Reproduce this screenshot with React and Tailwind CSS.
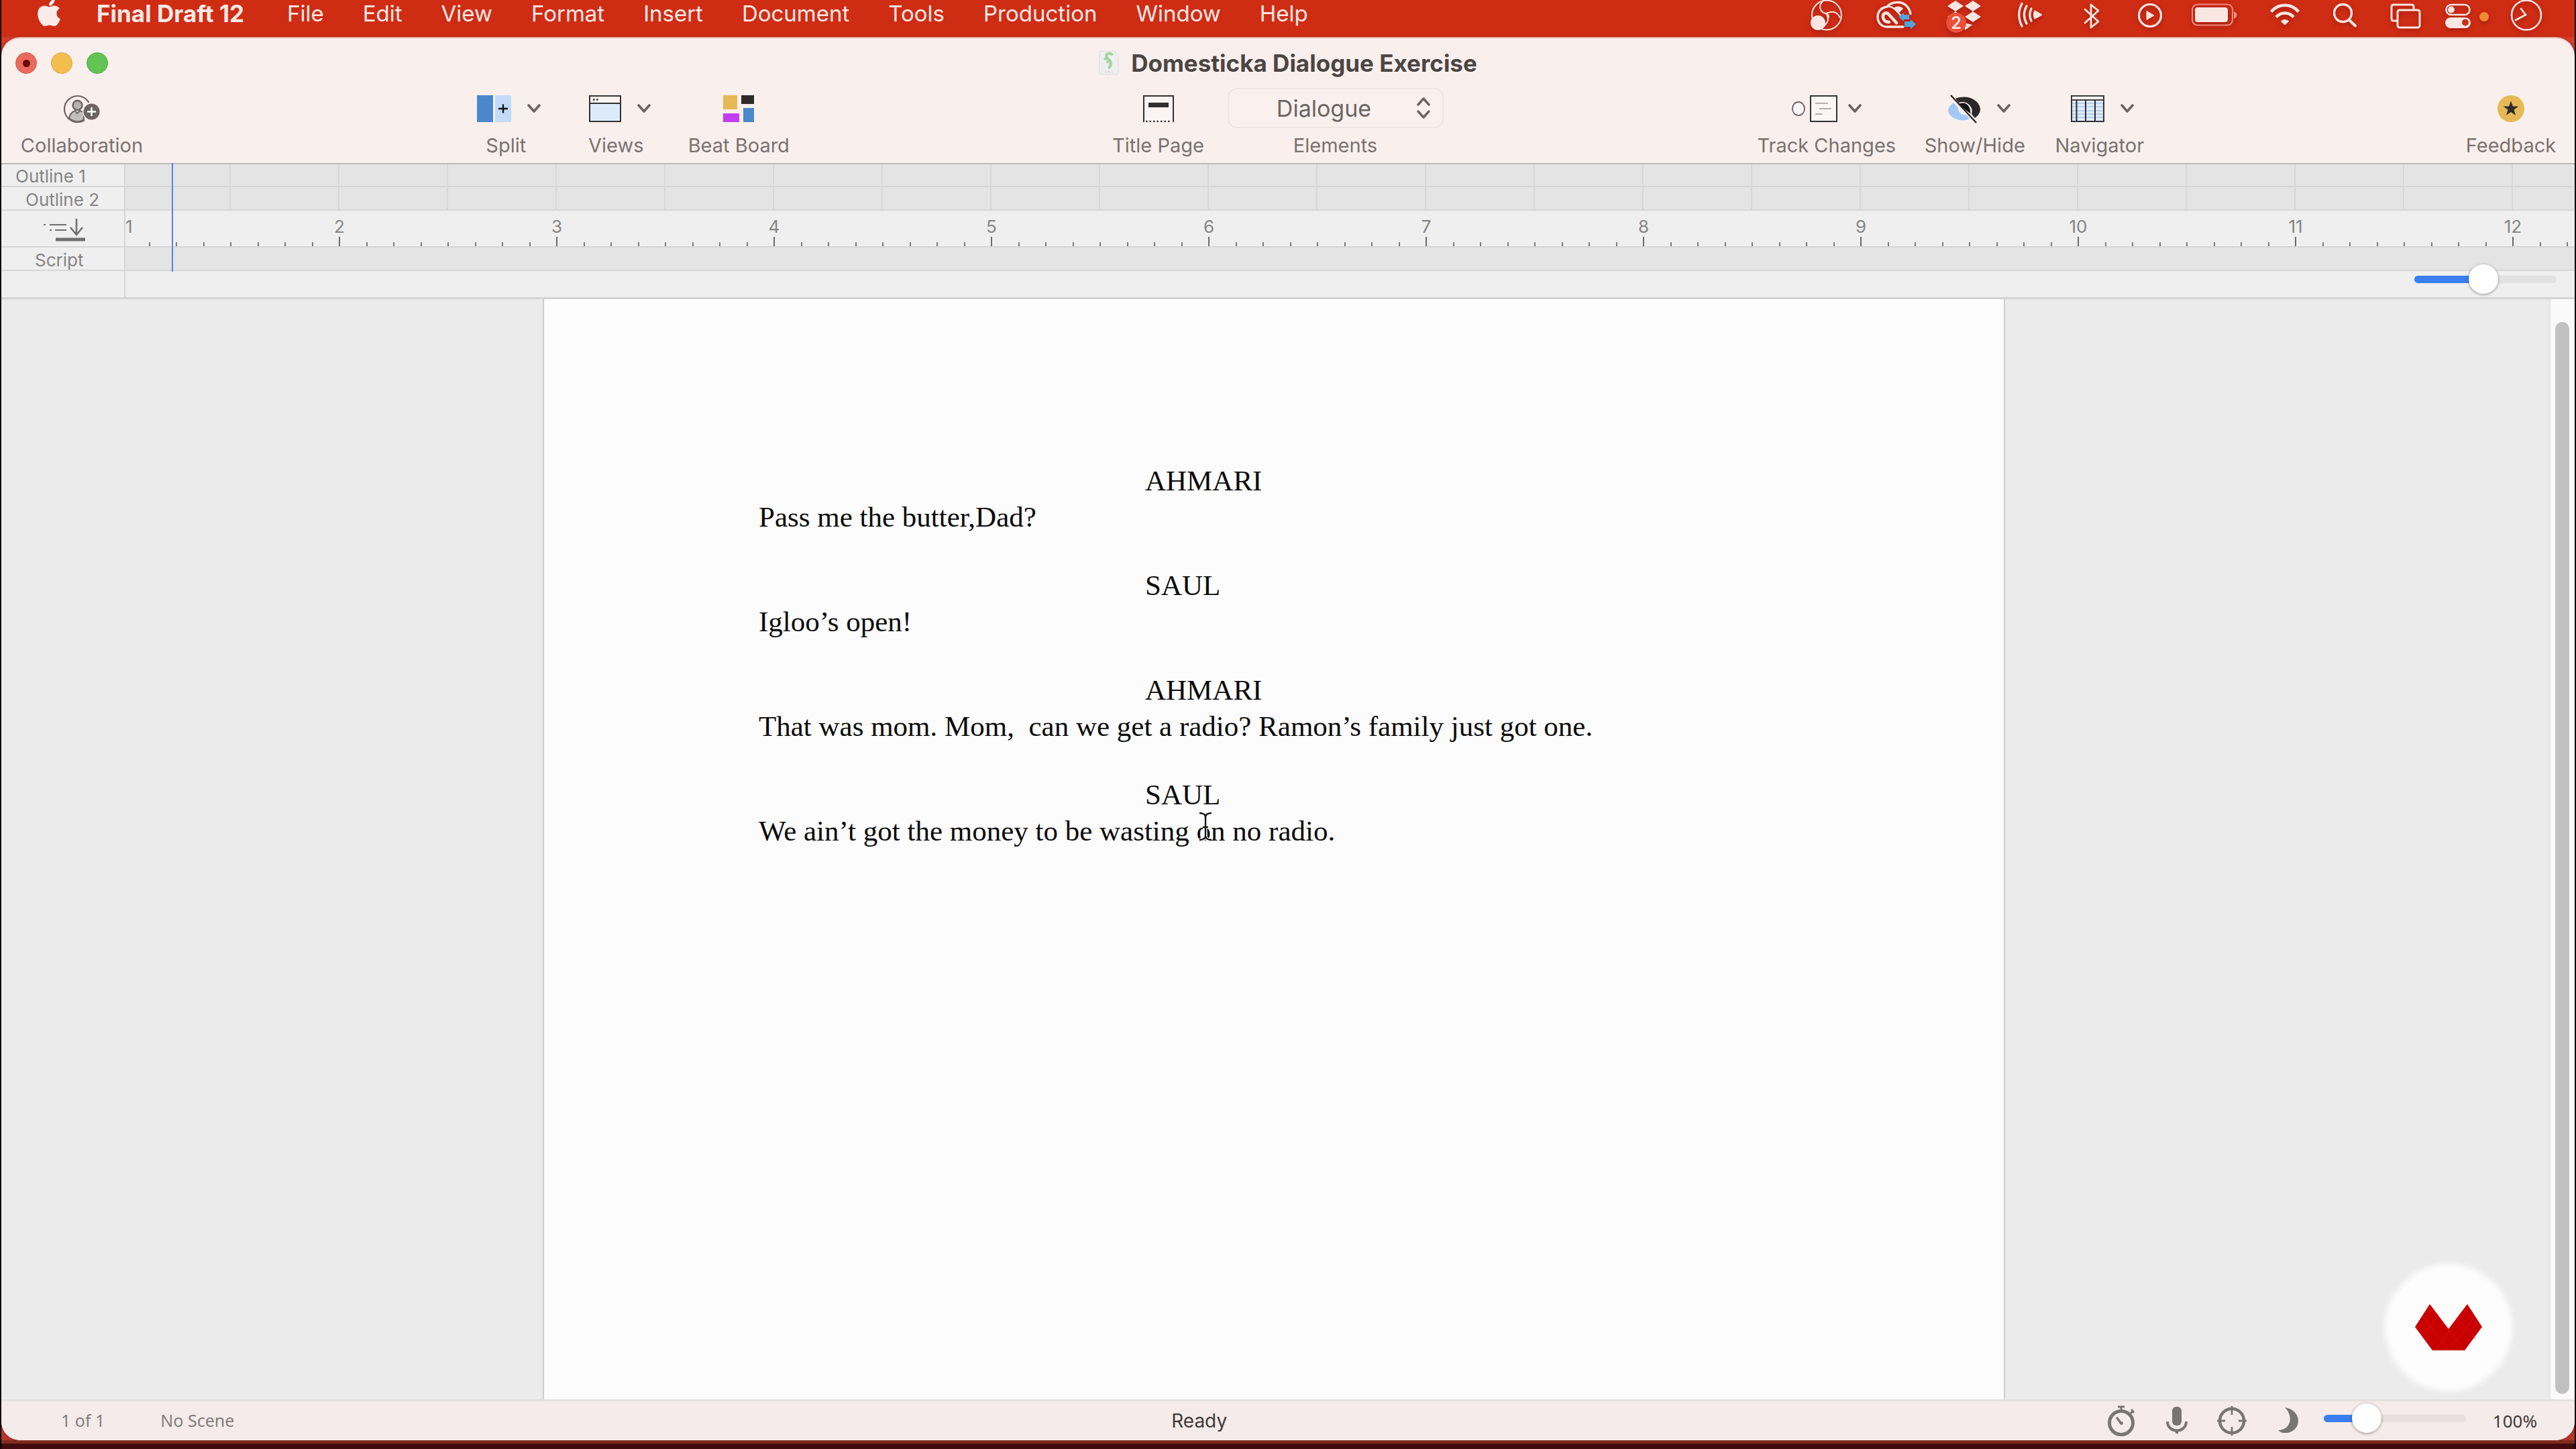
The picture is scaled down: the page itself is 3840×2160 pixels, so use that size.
import React from "react";
import { FaApple } from "react-icons/fa";

const MENUS = ["File", "Edit", "View", "Format", "Insert", "Document", "Tools", "Production", "Window", "Help"];

const SCRIPT = [
  { who: "AHMARI", line: "Pass me the butter,Dad?" },
  { who: "SAUL", line: "Igloo’s open!" },
  { who: "AHMARI", line: "That was mom. Mom,  can we get a radio? Ramon’s family just got one." },
  { who: "SAUL", line: "We ain’t got the money to be wasting on no radio." },
];

const PALE = "#fbe6e2";

/* ---------- menu bar status icons, all 48px tall ---------- */

const ObsIcon = () => (
  <svg width="48" height="48" viewBox="0 0 48 48" fill="none" stroke={PALE} strokeWidth="2">
    <circle cx="24" cy="22.500" r="22" />
    <path d="M18 2c-6 6-5 15 4 18 5 1 6 4 4 8" />
    <path d="M22 20c5-1 8-3 13-2 4 1 7 4 9 9" />
    <path d="M24 21c3 6 2 12-2 16-2 3-5 5-8 5" />
    <circle cx="11" cy="34" r="10" fill={PALE} />
  </svg>
);

const CloudIcon = () => (
  <svg width="59" height="48" viewBox="0 0 59 48" fill="none">
    <path d="M40 40H16C7 40 2 33 2 25S8 11 16 10C20 5 26 3.500 32 3.500c10 0 17 7 19 17" stroke={PALE} strokeWidth="3.400" strokeLinecap="round" />
    <path d="M16 10c5-1 9 1 13 5l10 11" stroke={PALE} strokeWidth="2.500" />
    <path d="M30 34 19 22c-4-5-10-2-9 4 1 5 4 7 9 7" stroke={PALE} strokeWidth="4.500" strokeLinecap="round" />
    <path d="M26 12c4-4 11-3 14 1l-6 6z" fill={PALE} />
    <path d="m33 25 8-6v3h8v7h-8v3z" fill="#4fa5de" />
    <path d="m59 36-8-7v3h-9v8h9v4z" fill="#4fa5de" />
  </svg>
);

const DropboxIcon = () => (
  <svg width="52" height="50" viewBox="0 0 52 50" fill={PALE}>
    <path d="m14 1 12 8-12 8L2 9zM40 1l12 8-12 8-12-8zM40 17l12 8-12 8-12-8zM14 17l12 8-12 8L2 25zM27 34l12 3-11 8z" />
    <circle cx="15" cy="34" r="15" fill="#ec4f38" />
    <text x="15" y="43" textAnchor="middle" fontSize="25" fontWeight="600" fontFamily="Inter, sans-serif">2</text>
  </svg>
);

const CastIcon = () => (
  <svg width="38" height="48" viewBox="0 0 38 48" fill="none" stroke={PALE} strokeWidth="3.200" strokeLinecap="round">
    <path d="M7 5.500C1 17 1 27 7 39M14 9c-5 9-5 17 0 26M21 13c-3 6-3 12 0 18" />
    <path d="M26 16c5 2 8 4 11 6-3 2-6 4-11 6-2-3-2-9 0-12z" fill={PALE} strokeWidth="1" />
  </svg>
);

const BluetoothIcon = () => (
  <svg width="24" height="48" viewBox="0 0 24 48" fill="none" stroke={PALE} strokeWidth="2.800" strokeLinejoin="round" strokeLinecap="round">
    <path d="M2 14l20 18-11 9V7l11 9L2 34" />
  </svg>
);

const PlayIcon = () => (
  <svg width="38" height="48" viewBox="0 0 38 48" fill="none" stroke={PALE} strokeWidth="3.200">
    <circle cx="19" cy="23" r="16.500" />
    <path d="M14 16.500v13l11-6.500z" fill={PALE} strokeWidth="1" strokeLinejoin="round" />
  </svg>
);

const BatteryIcon = () => (
  <svg width="69" height="48" viewBox="0 0 69 48" fill="none">
    <rect x="1" y="6.500" width="60" height="31" rx="8" stroke="#f08a7c" strokeWidth="2.200" />
    <rect x="5" y="11" width="49" height="22" rx="4" fill={PALE} />
    <path d="M63 17c6 2 6 9 0 11z" fill="#f08a7c" />
  </svg>
);

const WifiIcon = () => (
  <svg width="44" height="48" viewBox="0 0 44 48" fill="none" stroke={PALE} strokeWidth="4.600">
    <path d="M1.500 17.500c11-13 30-13 41 0" />
    <path d="M9 25.500c7-8 19-8 26 0" />
    <path d="M16 32c3-4 9-4 12 0l-6 5.500z" fill={PALE} stroke="none" />
  </svg>
);

const SearchIcon = () => (
  <svg width="35" height="48" viewBox="0 0 35 48" fill="none" stroke={PALE} strokeWidth="3.400" strokeLinecap="round">
    <circle cx="14.500" cy="19.500" r="13" />
    <path d="M24 30l9 8.500" strokeWidth="4" />
  </svg>
);

const WindowsIcon = () => (
  <svg width="46" height="48" viewBox="0 0 46 48" fill="none" stroke={PALE} strokeWidth="3" strokeLinejoin="round">
    <path d="M10 31H5c-2 0-3-1-3-3V10c0-2 1-3 3-3h27c2 0 3 1 3 3v4" />
    <rect x="11" y="15" width="33" height="26" rx="3" />
  </svg>
);

const ControlIcon = () => (
  <svg width="38" height="48" viewBox="0 0 38 48" fill="none">
    <rect x="1.500" y="7" width="35" height="15" rx="7.500" stroke={PALE} strokeWidth="2.600" />
    <circle cx="9" cy="14.500" r="5" fill={PALE} />
    <rect x="0" y="26" width="38" height="16" rx="8" fill={PALE} />
    <circle cx="30" cy="33.500" r="5" fill="#c92d17" />
  </svg>
);

const ClockIcon = () => (
  <svg width="48" height="48" viewBox="0 0 48 48" fill="none" stroke={PALE} strokeWidth="2.600">
    <circle cx="24" cy="22.500" r="22" />
    <path d="M16 13l7 9-15 8" strokeLinecap="round" />
  </svg>
);

const STATUS_ICONS = [
  { label: "OBS", icon: <ObsIcon />, gap: "" },
  { label: "Creative Cloud", icon: <CloudIcon />, gap: "ml-[50px]" },
  { label: "Dropbox", icon: <DropboxIcon />, gap: "ml-[45px]" },
  { label: "Cast", icon: <CastIcon />, gap: "ml-[54px]" },
  { label: "Bluetooth", icon: <BluetoothIcon />, gap: "ml-[61px]" },
  { label: "Now playing", icon: <PlayIcon />, gap: "ml-[56px]" },
  { label: "Battery", icon: <BatteryIcon />, gap: "ml-[43px]" },
  { label: "Wi-Fi", icon: <WifiIcon />, gap: "ml-[48px]" },
  { label: "Search", icon: <SearchIcon />, gap: "ml-[50px]" },
  { label: "Windows", icon: <WindowsIcon />, gap: "ml-[50px]" },
  { label: "Control Center", icon: <ControlIcon />, gap: "ml-[36px]" },
];

/* ---------- toolbar icons, 40px tall ---------- */

const Chevron = () => (
  <svg width="20" height="14" viewBox="0 0 20 14" fill="none" stroke="#6b6462" strokeWidth="3.600" strokeLinecap="round" strokeLinejoin="round">
    <path d="M2 2l8 9 8-9" />
  </svg>
);

const CollabIcon = () => (
  <svg width="54" height="42" viewBox="0 0 54 42" fill="none">
    <path d="M37.500 12A19.500 19.500 0 1 0 31 38" stroke="#6b6462" strokeWidth="2.200" />
    <path d="M8 35c1-6 4-9 9-11l3 4 4-4c3 1 5 2 6 4v9c-7 5-16 4-22-2z" fill="#c4bebd" stroke="#6b6462" strokeWidth="2" />
    <circle cx="20.500" cy="16" r="7" fill="#b8b2b1" stroke="#6b6462" strokeWidth="2.400" />
    <circle cx="41.500" cy="25.500" r="13.500" fill="#f9efed" />
    <circle cx="41.500" cy="25.500" r="12" fill="#6b6462" />
    <path d="M41.500 19v13M35 25.500h13" stroke="#fff" strokeWidth="2.600" />
  </svg>
);

const SplitIcon = () => (
  <svg width="51" height="40" viewBox="0 0 51 40">
    <rect width="24" height="40" fill="#4b87cb" />
    <rect x="27" width="24" height="40" fill="#c2dbf8" />
    <path d="M39 13.500v13M32 20h14" stroke="#111" strokeWidth="2.400" />
  </svg>
);

const ViewsIcon = () => (
  <svg width="48" height="40" viewBox="0 0 48 40" fill="none" stroke="#333" strokeWidth="2">
    <rect x="1" y="1" width="46" height="38" fill="#dcebf9" />
    <rect x="1" y="1" width="46" height="11" fill="#faf3f2" />
    <path d="M6 6.500h2.500M11 6.500h2.500" strokeWidth="2.500" />
  </svg>
);

const BeatIcon = () => (
  <svg width="46" height="40" viewBox="0 0 46 40">
    <rect width="21" height="21" fill="#e7b856" />
    <rect x="27" width="19" height="13" fill="#2f2b2b" />
    <rect y="27" width="24" height="13" fill="#c43df0" />
    <rect x="30" y="19" width="16" height="21" fill="#4b87cb" />
  </svg>
);

const TitlePageIcon = () => (
  <svg width="46" height="40" viewBox="0 0 46 40" fill="none" stroke="#332e2d">
    <path d="M1 40V1h44v39" strokeWidth="2" fill="#fbf4f3" />
    <path d="M8 14.500h30" strokeWidth="7" />
    <path d="M4 39h38" strokeWidth="2.400" strokeDasharray="2.500 3" />
  </svg>
);

const TrackIcon = () => (
  <svg className="-mr-2" width="68" height="40" viewBox="0 0 68 40" fill="none">
    <ellipse cx="10" cy="20" rx="9" ry="10" stroke="#6b6462" strokeWidth="1.800" fill="#fbf6f5" />
    <rect x="28" y="1" width="39" height="38" stroke="#333" strokeWidth="2" fill="#fbf6f5" />
    <path d="M35 12h19M41 20h18M35 28h11" stroke="#b3adab" strokeWidth="2.200" />
  </svg>
);

const EyeIcon = () => (
  <svg width="50" height="44" viewBox="0 0 50 44" fill="none">
    <path d="M9 13C-5 23 1 35 18 39c6 1 11 0 15-2l-5-6c-8 1-12-4-12-10z" fill="#a3c8f6" />
    <path d="M12 7c18-7 35 2 37 15 0 6-3 10-8 14l-5-6c3-8-3-17-13-18-2 0-4 0-6 1z" fill="#2b2828" />
    <path d="M20 16c6-2 11 2 12 9z" fill="#111" stroke="#111" strokeWidth="4" />
    <path d="M5 2l38 41" stroke="#2b2828" strokeWidth="2.400" />
  </svg>
);

const NavigatorIcon = () => (
  <svg width="50" height="40" viewBox="0 0 50 40" fill="none">
    <rect x="1" y="1" width="48" height="38" fill="#dcebf9" stroke="#333" strokeWidth="2" />
    <rect x="1" y="1" width="48" height="6" fill="#fbf6f5" stroke="#333" strokeWidth="1.800" />
    <path d="M2 12h46M2 17h46M2 23h46M2 28h46M2 33h46" stroke="#aac9e6" strokeWidth="1.600" />
    <path d="M8.500 7v32M22 7v32M36 7v32" stroke="#2b2828" strokeWidth="2" />
  </svg>
);

const FeedbackIcon = () => (
  <svg width="40" height="40" viewBox="0 0 40 40">
    <circle cx="20" cy="20" r="20" fill="#e7b956" />
    <path d="M20 8.500l3 8h8.500l-7 5 2.700 8.500-7.200-5-7.200 5 2.700-8.500-7-5H17z" fill="#2f2b28" />
  </svg>
);

const DocIcon = () => (
  <svg width="30" height="38" viewBox="0 0 32 40" fill="none">
    <path d="M3 1h22l6 6v29c0 1-1 2-2 2H3c-1 0-2-1-2-2V3c0-1 1-2 2-2z" fill="#efefee" stroke="#e0dcdb" />
    <path d="M21 8c-1-5-9-4-9 1 0 5 8 6 7 12 0 4-2 6-4 7" stroke="#a5d3a1" strokeWidth="4.500" />
    <path d="M8 13l9 2M12 19l6-2" stroke="#a5d3a1" strokeWidth="3" />
    <path d="M10 34h12" stroke="#e3d6c8" strokeWidth="3" strokeDasharray="3 2" />
  </svg>
);

/* ---------- bottom status bar icons ---------- */

const GRAY = "#7a7472";

const StopwatchIcon = () => (
  <svg width="42" height="46" viewBox="0 0 42 46" fill="none" stroke={GRAY}>
    <circle cx="21" cy="26" r="17.500" strokeWidth="5" />
    <path d="M16 2h10M21 2v6" strokeWidth="3" />
    <path d="M35 12l3-3M36 6l4 5" strokeWidth="3" />
    <path d="M15 19l6 8" strokeWidth="3.500" strokeLinecap="round" />
    <circle cx="21.500" cy="26.500" r="2" fill={GRAY} />
  </svg>
);

const MicIcon = () => (
  <svg width="32" height="46" viewBox="0 0 32 46" fill="none" stroke={GRAY}>
    <rect x="9" y="2" width="14" height="28" rx="6" fill={GRAY} stroke="none" />
    <path d="M2 24c0 18 28 18 28 0" strokeWidth="4" />
    <path d="M16 37v5" strokeWidth="4" />
  </svg>
);

const TargetIcon = () => (
  <svg width="46" height="46" viewBox="0 0 46 46" fill="none" stroke={GRAY}>
    <circle cx="23" cy="23" r="18" strokeWidth="4.500" />
    <path d="M23 1v13M23 32v13M1 23h12M33 23h12" strokeWidth="2.800" />
  </svg>
);

const MoonIcon = () => (
  <svg width="32" height="46" viewBox="0 0 32 46" fill={GRAY}>
    <path d="M11 3c12 2 20 10 20 20 0 11-10 19-21 18-4 0-7-2-9-4 18 0 24-20 10-34z" />
  </svg>
);

function ToolItem({ label, icon, menu, width, shift = "" }) {
  return (
    <button type="button" className={`flex shrink-0 flex-col items-center ${width}`}>
      <span className={`flex h-[60px] items-center gap-[24px] pt-[2px] ${shift}`}>
        {icon}
        {menu && <Chevron />}
      </span>
      <span className="mt-2 whitespace-nowrap text-[29px] leading-[36px] text-[#797270]">{label}</span>
    </button>
  );
}

function Slider({ label, value, track }) {
  return (
    <input
      type="range"
      aria-label={label}
      defaultValue={value}
      className={`h-[11px] w-[212px] shrink-0 appearance-none rounded-full ${track} [&::-webkit-slider-thumb]:size-[44px] [&::-webkit-slider-thumb]:appearance-none [&::-webkit-slider-thumb]:rounded-full [&::-webkit-slider-thumb]:bg-white [&::-webkit-slider-thumb]:shadow-[0_1px_4px_rgba(0,0,0,0.4)]`}
    />
  );
}

function MenuBar() {
  return (
    <header className="flex h-[55px] shrink-0 items-start justify-between bg-[#cf2c14] pl-[48px] pr-[48px] text-[33px] leading-[41px] text-[#fbe9e6]">
      <nav className="flex items-start [text-shadow:0_3px_5px_rgba(90,0,0,0.45)]">
        <button type="button" aria-label="Apple menu" className="-mt-1 w-[94px]">
          <FaApple size={46} color="#fbecea" />
        </button>
        <button type="button" className="w-[284px] text-left text-[35px] font-bold">Final Draft 12</button>
        <div className="flex gap-[58px]">
          {MENUS.map((m) => (
            <button type="button" key={m}>{m}</button>
          ))}
        </div>
      </nav>
      <div className="flex items-start drop-shadow-[0_3px_3px_rgba(90,0,0,0.35)]">
        {STATUS_ICONS.map((s) => (
          <button type="button" key={s.label} aria-label={s.label} className={s.gap}>{s.icon}</button>
        ))}
        <span className="ml-[13px] mt-[18px] size-[14px] rounded-full bg-[#ee8a33]" />
        <button type="button" aria-label="Clock" className="ml-[32px]"><ClockIcon /></button>
      </div>
    </header>
  );
}

function TitleBar() {
  return (
    <div className="grid h-[74px] grid-cols-[1fr_auto_1fr] items-center pl-[21px]">
      <div className="flex gap-[21px]">
        <button type="button" aria-label="Close" className="flex size-8 items-center justify-center rounded-full border border-[#cf5a50] bg-[#ea6a5f]">
          <span className="size-[11px] rounded-full bg-[#6e0a06]" />
        </button>
        <button type="button" aria-label="Minimize" className="size-8 rounded-full border border-[#d9a43c] bg-[#f3be4d]" />
        <button type="button" aria-label="Zoom" className="size-8 rounded-full border border-[#50ab43] bg-[#61c454]" />
      </div>
      <h1 className="-ml-[21px] flex items-center gap-[18px] text-[35px] font-bold leading-[40px] text-[#4b4543]">
        <DocIcon />
        Domesticka Dialogue Exercise
      </h1>
      <span />
    </div>
  );
}

function Toolbar() {
  return (
    <div className="flex pl-[26px] pr-[27px]">
      <ToolItem label="Collaboration" icon={<CollabIcon />} width="w-[188px]" />
      <div className="grow-[482]" />
      <div className="flex gap-[50px]">
        <ToolItem label="Split" icon={<SplitIcon />} menu width="w-[114px]" shift="pl-2" />
        <ToolItem label="Views" icon={<ViewsIcon />} menu width="w-[114px]" shift="pl-3" />
        <ToolItem label="Beat Board" icon={<BeatIcon />} width="w-[152px]" />
      </div>
      <div className="grow-[481]" />
      <div className="flex gap-[34px]">
        <ToolItem label="Title Page" icon={<TitlePageIcon />} width="w-[138px]" />
        <div className="flex w-[322px] flex-col items-center">
          <div className="relative w-full">
            <select id="element" className="h-[60px] w-full appearance-none rounded-[14px] border-2 border-[#f0e5e3] bg-[#faf1ef] pr-[34px] [text-align-last:center] text-[34px] text-[#6c6462]">
              <option>Dialogue</option>
            </select>
            <svg className="pointer-events-none absolute right-[20px] top-[14px]" width="20" height="32" viewBox="0 0 20 32" fill="none" stroke="#6b6462" strokeWidth="3.400" strokeLinecap="round" strokeLinejoin="round">
              <path d="M2 11l8-9 8 9M2 21l8 9 8-9" />
            </svg>
          </div>
          <label htmlFor="element" className="mt-2 text-[29px] leading-[36px] text-[#797270]">Elements</label>
        </div>
      </div>
      <div className="grow-[469]" />
      <div className="flex gap-[44px]">
        <ToolItem label="Track Changes" icon={<TrackIcon />} menu width="w-[206px]" />
        <ToolItem label="Show/Hide" icon={<EyeIcon />} menu width="w-[148px]" shift="pl-3" />
        <ToolItem label="Navigator" icon={<NavigatorIcon />} menu width="w-[136px]" shift="pl-2" />
      </div>
      <div className="grow-[478]" />
      <ToolItem label="Feedback" icon={<FeedbackIcon />} width="w-[136px]" />
    </div>
  );
}

function RowLabel({ children, pad }) {
  return (
    <div className={`flex w-[185px] shrink-0 items-center border-r-2 border-[#d6d6d6] bg-[#efefef] text-[26px] leading-[30px] text-[#858585] ${pad}`}>
      {children}
    </div>
  );
}

function OutlineGrid() {
  return (
    <div className="flex min-w-0 flex-1 overflow-hidden bg-[#e4e4e4]">
      <div className="w-[157px] shrink-0 border-r-2 border-[#d8d8d8]" />
      {Array.from({ length: 22 }, (_, i) => (
        <div key={i} className="w-[162px] shrink-0 border-r-2 border-[#d8d8d8]" />
      ))}
    </div>
  );
}

function Ruler() {
  return (
    <div className="flex min-w-0 flex-1 flex-col justify-between overflow-hidden bg-[#efefef]">
      <div className="flex pt-[9px] text-[26px] leading-[30px] text-[#858585]">
        <span className="w-[157px] shrink-0">1</span>
        {Array.from({ length: 11 }, (_, i) => (
          <span key={i} className="w-[324px] shrink-0 text-center">{i + 2}</span>
        ))}
      </div>
      <div className="flex pb-[2px]">
        {Array.from({ length: 12 }, (_, c) => (
          <div key={c} className="flex w-[324px] shrink-0 items-end first:-ml-[6px]">
            {Array.from({ length: 8 }, (_, t) => (
              <span key={t} className={t === 0 ? "h-[16px] flex-1 border-l-2 border-[#6a6a6a]" : "h-[8px] flex-1 border-l-2 border-[#7a7a7a]"} />
            ))}
          </div>
        ))}
      </div>
    </div>
  );
}

function OutlinePanel() {
  return (
    <section className="relative border-t-2 border-[#bdbbbb]">
      <div className="flex h-[34px] border-b-2 border-[#d6d6d6]">
        <RowLabel pad="pl-[21px] pt-1">Outline 1</RowLabel>
        <OutlineGrid />
      </div>
      <div className="flex h-[35px] border-b-2 border-[#d6d6d6]">
        <RowLabel pad="pl-[36px] pt-1">Outline 2</RowLabel>
        <OutlineGrid />
      </div>
      <div className="flex h-[55px] border-b-2 border-[#d6d6d6]">
        <RowLabel pad="pl-[62px] pt-1">
          <button type="button" aria-label="Jump to outline">
            <svg width="64" height="36" viewBox="0 0 64 36" fill="none" stroke="#6f6f6f" strokeWidth="2.200">
              <path d="M1 10h3M10 10h25M10 18h3M18 18h17" />
              <path d="M50 1v23M41 14l9 11 9-11" strokeWidth="2.600" />
              <path d="M19 32h44" strokeWidth="5" />
            </svg>
          </button>
        </RowLabel>
        <Ruler />
      </div>
      <div className="flex h-[35px] border-b-2 border-[#d6d6d6]">
        <RowLabel pad="pl-[50px] pt-1">Script</RowLabel>
        <div className="flex-1 bg-[#e4e4e4]" />
      </div>
      <div className="flex h-[42px] border-b-[3px] border-[#d3d3d3]">
        <RowLabel pad="" />
        <div className="flex flex-1 items-center justify-end bg-[#efefef] pb-4 pr-[27px] pt-[1px]">
          <Slider label="Outline zoom" value={48} track="bg-[linear-gradient(to_right,#3a7ff2_49%,#e2e2e2_49%)]" />
        </div>
      </div>
      <div className="absolute -top-[2px] left-[254px] h-[162px] w-[2px] bg-[#5b80e6]" />
    </section>
  );
}

function Page() {
  return (
    <main className="flex min-h-0 flex-1 bg-[#ebebeb]">
      <div className="flex min-w-0 flex-1 justify-center pr-1">
        <article className="w-[2180px] border-x-2 border-[#cdcdcd] bg-[#fcfcfc] pl-[320px] pt-[244px] font-['Liberation_Serif','Times_New_Roman',serif] text-[43px] leading-[54px] text-[#0b0b0b]">
          {SCRIPT.map((s, i) => (
            <div key={i} className="relative mb-[48px]">
              <p className="pl-[576px]">{s.who}</p>
              <p className="whitespace-pre">{s.line}</p>
              {i === 3 && (
                <svg className="absolute left-[656px] top-[52px]" width="20" height="44" viewBox="0 0 20 44" fill="none" stroke="#fcfcfc" strokeWidth="5">
                  <path d="M1 2c5 0 9 2 9 6 0-4 4-6 9-6M10 7v30M6 23h8M1 42c5 0 9-2 9-6 0 4 4 6 9 6" />
                  <path d="M1 2c5 0 9 2 9 6 0-4 4-6 9-6M10 7v30M6 23h8M1 42c5 0 9-2 9-6 0 4 4 6 9 6" stroke="#111" strokeWidth="2.400" />
                </svg>
              )}
            </div>
          ))}
        </article>
      </div>
      <div className="flex w-[38px] shrink-0 flex-col border-l-2 border-[#e4e4e4] bg-[#fafafa] pb-[8px] pl-[7px] pt-[34px]">
        <div className="w-[21px] flex-1 rounded-full bg-[#c1c1c1]" />
      </div>
    </main>
  );
}

function StatusBar() {
  return (
    <footer className="flex h-[61px] shrink-0 items-center border-t-[3px] border-[#e6e0df] bg-[#f4ebea] font-['Noto_Sans',sans-serif] text-[25px] text-[#847d7b]">
      <div className="flex w-[45%] gap-[83px] pl-[89px]">
        <span>1 of 1</span>
        <span>No Scene</span>
      </div>
      <span className="pl-[18px] font-['Inter',sans-serif] text-[28px] text-[#3f3a39]">Ready</span>
      <div className="ml-auto flex items-center pr-[56px]">
        <button type="button" aria-label="Sprint timer"><StopwatchIcon /></button>
        <button type="button" aria-label="Dictation" className="ml-[46px]"><MicIcon /></button>
        <button type="button" aria-label="Focus" className="ml-[43px]"><TargetIcon /></button>
        <button type="button" aria-label="Night mode" className="ml-[45px] mr-[37px]"><MoonIcon /></button>
        <div className="flex items-center pb-2">
          <Slider label="Zoom" value={25} track="bg-[linear-gradient(to_right,#3a7ff2_30%,#e6dddc_30%)]" />
        </div>
        <span className="ml-[40px] text-[26px] text-[#3f3a39]">100%</span>
      </div>
    </footer>
  );
}

export default function App() {
  return (
    <div className="flex h-screen flex-col bg-black px-[2px] font-['Inter',sans-serif]">
      <MenuBar />
      <div className="flex min-h-0 flex-1 flex-col bg-[linear-gradient(to_bottom,#d63a2c,#b4342a)]">
        <div className="flex min-h-0 flex-1 flex-col overflow-hidden rounded-[28px] border-t-2 border-[#e9a89f] bg-[#f9efed] shadow-[0_0_2px_rgba(80,0,0,0.8)]">
          <TitleBar />
          <div className="h-[112px] shrink-0">
            <Toolbar />
          </div>
          <OutlinePanel />
          <Page />
          <StatusBar />
        </div>
        <div className="h-[5px] shrink-0 bg-[#7e2c20]" />
        <div className="h-[8px] shrink-0 bg-[#420b0d]" />
      </div>
      <button type="button" aria-label="Domestika" className="absolute bottom-[83px] right-[92px] flex size-[196px] items-center justify-center rounded-full">
        <span className="absolute inset-[3px] rounded-full bg-[#fdfdfd] blur-[4px]" />
        <svg className="relative" width="100" height="70" viewBox="0 0 100 70">
          <path d="M22 0L50 37L78 0L100 34L74 69H26L0 34z" fill="#c90000" />
          <path d="M11 18L50 69M74 69L33 16M11 50L35 15M30 69L67 18M89 18L50 69M61 20L90 52" stroke="#d22020" strokeWidth="0.700" fill="none" />
        </svg>
      </button>
    </div>
  );
}
